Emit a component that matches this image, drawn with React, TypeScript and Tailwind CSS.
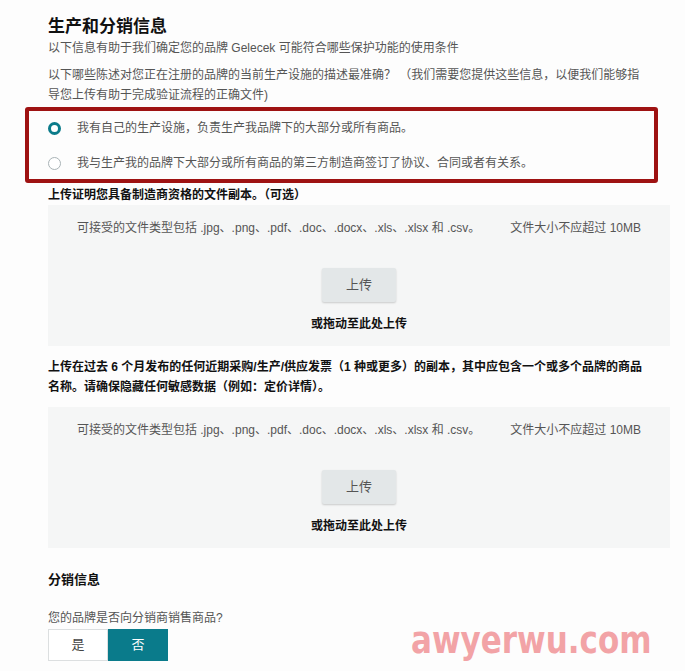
import React from 'react'

const font = { fontFamily: '"Liberation Sans", Arial, "Noto Sans CJK SC", sans-serif' }

function Radio({ checked, label }: { checked?: boolean; label: string }) {
    return (
        <label className="flex items-center h-[20px] text-[12px] text-[#555]">
            <span
                className={`ml-[19px] w-[13px] h-[13px] rounded-full shrink-0 bg-white ${checked ? 'border-[3.5px] border-[#0b7b8a]' : 'border border-[#a9b3b6]'}`}
            />
            <span className="ml-[16px] leading-[20px]">{label}</span>
        </label>
    )
}

function UploadBox() {
    return (
        <div className="bg-[#f5f6f6] pt-[13px] pb-[12px] flex flex-col items-center">
            <p className="text-[12px] leading-[20px] text-[#555]">
                可接受的文件类型包括 .jpg、.png、.pdf、.doc、.docx、.xls、.xlsx 和 .csv。
                <span className="ml-[30px]">文件大小不应超过 10MB</span>
            </p>
            <button className="mt-[30px] w-[74px] h-[34px] bg-[#e3e7e8] text-[13px] text-[#555] rounded-[2px] shadow-[0_1px_2px_rgba(0,0,0,0.18)]">
                上传
            </button>
            <p className="mt-[12px] text-[12px] leading-[20px] font-bold text-[#111]">或拖动至此处上传</p>
        </div>
    )
}

export default function App() {
    return (
        <div className="relative min-h-screen bg-[#fdfdfd] pl-[48px] pr-[15px] pt-[16px] pb-[10px] overflow-hidden" style={font}>
            <h2 className="text-[17px] leading-[22px] font-bold text-[#111]">生产和分销信息</h2>
            <p className="text-[12px] leading-[20px] text-[#555]">
                以下信息有助于我们确定您的品牌 Gelecek 可能符合哪些保护功能的使用条件
            </p>
            <p className="mt-[7px] text-[12px] leading-[20px] text-[#555] pr-[24px]">
                以下哪些陈述对您正在注册的品牌的当前生产设施的描述最准确？ （我们需要您提供这些信息，以便我们能够指导您上传有助于完成验证流程的正确文件)
            </p>

            {/* highlighted options */}
            <div className="mt-[2px] -ml-[23px] w-[633px] border-4 border-[#9e1212] rounded-[3px] pt-[7px] pb-[6px] flex flex-col gap-[15px]">
                <Radio checked label="我有自己的生产设施，负责生产我品牌下的大部分或所有商品。" />
                <Radio label="我与生产我的品牌下大部分或所有商品的第三方制造商签订了协议、合同或者有关系。" />
            </div>

            <p className="mt-[2px] text-[12px] leading-[20px] font-bold text-[#111]">上传证明您具备制造商资格的文件副本。（可选）</p>
            <UploadBox />

            <p className="mt-[11px] text-[12px] leading-[20px] font-bold text-[#111] pr-[20px]">
                上传在过去 6 个月发布的任何近期采购/生产/供应发票（1 种或更多）的副本，其中应包含一个或多个品牌的商品名称。请确保隐藏任何敏感数据（例如：定价详情）。
            </p>
            <div className="mt-[10px]">
                <UploadBox />
            </div>

            <h3 className="mt-[22px] text-[13px] leading-[20px] font-bold text-[#111]">分销信息</h3>
            <p className="mt-[18px] text-[12px] leading-[20px] text-[#555]">您的品牌是否向分销商销售商品?</p>
            <div className="mt-[1px] flex h-[32px]">
                <button className="w-[60px] bg-white border border-[#dcdfe0] text-[13px] text-[#444]">是</button>
                <button className="w-[60px] bg-[#0a7b8b] text-[13px] text-white">否</button>
            </div>

            {/* watermark */}
            <div
                className="absolute left-[411px] top-[616px] text-[31px] leading-[40px] font-bold text-[#f2a3a6] scale-y-[1.2] origin-top pointer-events-none"
                style={{ fontFamily: '"DejaVu Sans", sans-serif' }}
            >
                awyerwu.com
            </div>
        </div>
    )
}
